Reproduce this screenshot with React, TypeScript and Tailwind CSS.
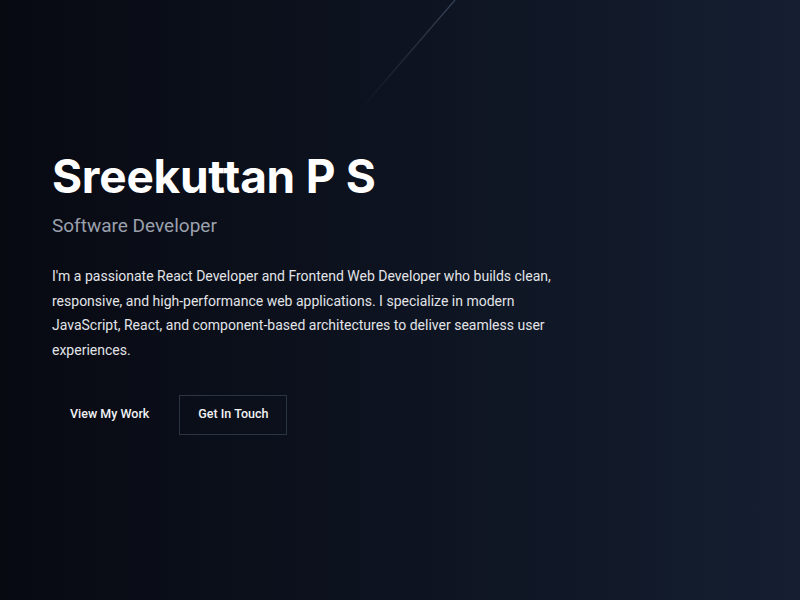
const App = () => (
  <section
    className="relative h-[600px] w-full overflow-hidden bg-gradient-to-r from-[#080a12] via-[#0d1320] to-[#151f31] text-white"
    style={{ fontFamily: "Roboto, 'Noto Sans', sans-serif" }}
  >
    {/* faint streak */}
    <svg className="absolute left-0 top-0 h-[600px] w-[800px] pointer-events-none" viewBox="0 0 800 600">
      <defs>
        <linearGradient id="streak" x1="455" y1="0" x2="360" y2="110" gradientUnits="userSpaceOnUse">
          <stop offset="0" stopColor="#5b6b85" stopOpacity="0.55" />
          <stop offset="1" stopColor="#5b6b85" stopOpacity="0" />
        </linearGradient>
      </defs>
      <line x1="455" y1="0" x2="360" y2="110" stroke="url(#streak)" strokeWidth="1.2" />
    </svg>

    <div className="relative px-[52px] pt-[146px]">
      <h1
        className="text-[46px] font-bold leading-[60px] tracking-[-0.25px]"
        style={{ fontFamily: "Inter, 'Noto Sans', sans-serif" }}
      >
        Sreekuttan P S
      </h1>
      <p className="mt-[6px] text-[19px] leading-7 text-[#9aa1ad]">Software Developer</p>
      <p className="mt-[24px] max-w-[500px] text-[14px] leading-[24.7px] text-[#e2e4e8]">
        I'm a passionate React Developer and Frontend Web Developer who builds clean, responsive, and
        high-performance web applications. I specialize in modern JavaScript, React, and component-based
        architectures to deliver seamless user experiences.
      </p>
      <div className="mt-[32px] flex items-center gap-3">
        <button className="h-10 px-[18px] text-[12.5px] font-medium text-[#f1f2f4]">View My Work</button>
        <button className="h-10 border border-[#2b3442] px-[18px] text-[12.5px] font-medium text-[#f1f2f4]">
          Get In Touch
        </button>
      </div>
    </div>
  </section>
);

export default App;
